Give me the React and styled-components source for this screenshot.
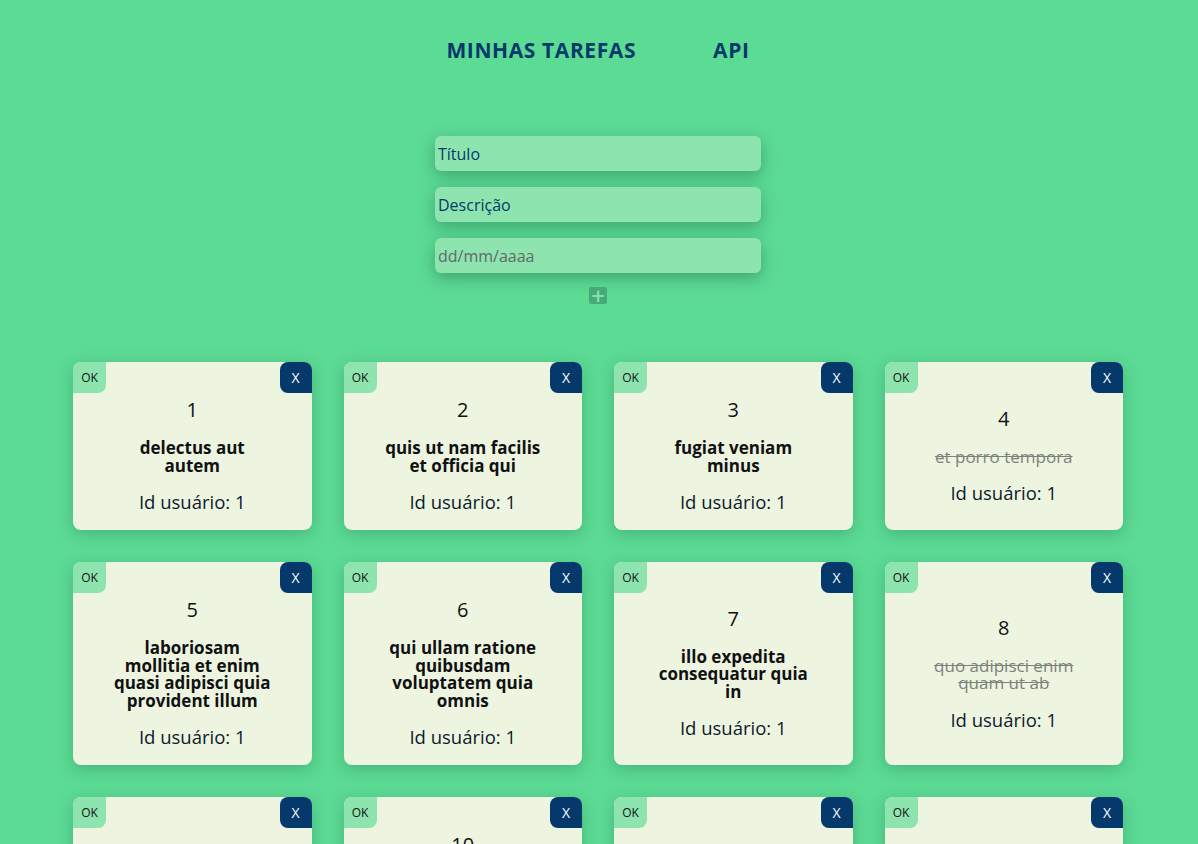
import React from 'react';
import styled, { createGlobalStyle } from 'styled-components';

const GlobalStyle = createGlobalStyle`
  * { box-sizing: border-box; }
  body {
    margin: 0;
    background: #5cdb95;
    font-family: "Open Sans", "Noto Sans", sans-serif;
  }
`;

const todos = [
  { id: 1, title: 'delectus aut autem', done: false },
  { id: 2, title: 'quis ut nam facilis et officia qui', done: false },
  { id: 3, title: 'fugiat veniam minus', done: false },
  { id: 4, title: 'et porro tempora', done: true },
  { id: 5, title: 'laboriosam mollitia et enim quasi adipisci quia provident illum', done: false },
  { id: 6, title: 'qui ullam ratione quibusdam voluptatem quia omnis', done: false },
  { id: 7, title: 'illo expedita consequatur quia in', done: false },
  { id: 8, title: 'quo adipisci enim quam ut ab', done: true },
  { id: 9, title: 'molestiae perspiciatis ipsa', done: false },
  { id: 10, title: 'illo est ratione doloremque quia maiores aut', done: true },
  { id: 11, title: 'vero rerum temporibus dolor', done: true },
  { id: 12, title: 'ipsa repellendus fugit nisi', done: true },
];

const Page = styled.main`
  padding-right: 2px;
`;

const Nav = styled.nav`
  display: flex;
  justify-content: center;
  gap: 77px;
  padding-top: 38px;
`;

const NavLink = styled.a`
  color: #05386b;
  font-size: 21px;
  line-height: 24px;
  font-weight: 700;
  letter-spacing: 0.6px;
  text-decoration: none;
  cursor: pointer;
`;

const Form = styled.form`
  display: flex;
  flex-direction: column;
  align-items: center;
  gap: 16px;
  margin-top: 74px;
`;

const Input = styled.input`
  width: 326px;
  height: 35px;
  border: none;
  border-radius: 6px;
  padding: 0 3px;
  background: #8ee4af;
  color: #05386b;
  font-family: inherit;
  font-size: 16px;
  box-shadow: 0 5px 16px rgba(20, 90, 60, 0.42);
  outline: none;
  &::placeholder {
    color: ${p => (p.$muted ? '#5f6b66' : '#05386b')};
    opacity: 1;
  }
`;

const AddButton = styled.button`
  width: 18px;
  height: 17px;
  margin-top: -2px;
  padding: 0;
  border: none;
  border-radius: 2px;
  background: #46ab79;
  color: #86e2ad;
  font-size: 18px;
  font-weight: 700;
  line-height: 17px;
  font-family: "DejaVu Sans", sans-serif;
  cursor: pointer;
`;

const Grid = styled.section`
  display: grid;
  grid-template-columns: repeat(4, 238.5px);
  justify-content: center;
  gap: 32px;
  margin-top: 58px;
  padding-bottom: 40px;
`;

const Card = styled.article`
  display: flex;
  flex-direction: column;
  background: #edf5e1;
  border-radius: 8px;
  overflow: hidden;
  box-shadow: 0 4px 16px rgba(20, 90, 60, 0.3);
`;

const CardBar = styled.div`
  display: flex;
  justify-content: space-between;
`;

const OkButton = styled.button`
  width: 33px;
  height: 31px;
  border: none;
  padding: 0;
  border-radius: 0 0 8px 0;
  background: #8ee4af;
  color: #111;
  font-family: inherit;
  font-size: 12px;
  cursor: pointer;
`;

const CloseButton = styled.button`
  width: 32px;
  height: 31px;
  border: none;
  padding: 0;
  border-radius: 8px 0 0 8px;
  background: #05386b;
  color: #fff;
  font-family: inherit;
  font-size: 14px;
  cursor: pointer;
`;

const CardBody = styled.div`
  flex: 1;
  display: flex;
  flex-direction: column;
  align-items: center;
  justify-content: center;
  padding: 5px 14px 17px;
  text-align: center;
`;

const Number = styled.h2`
  margin: 0 0 17px;
  font-size: 20px;
  line-height: 24px;
  font-weight: 400;
  color: #111;
`;

const Title = styled.h3`
  margin: 0 0 17px;
  max-width: 161px;
  font-size: 17px;
  line-height: 17.5px;
  font-weight: ${p => (p.$done ? 400 : 700)};
  color: ${p => (p.$done ? '#7c827a' : '#111')};
  text-decoration: ${p => (p.$done ? 'line-through' : 'none')};
`;

const UserId = styled.p`
  margin: 0;
  font-size: 18.5px;
  line-height: 22px;
  color: #0d1a2b;
`;

const TodoCard = ({ todo }) => (
  <Card>
    <CardBar>
      <OkButton type="button">OK</OkButton>
      <CloseButton type="button">X</CloseButton>
    </CardBar>
    <CardBody>
      <Number>{todo.id}</Number>
      <Title $done={todo.done}>{todo.title}</Title>
      <UserId>Id usuário: 1</UserId>
    </CardBody>
  </Card>
);

export default function App() {
  return (
    <Page>
      <GlobalStyle />
      <Nav>
        <NavLink>MINHAS TAREFAS</NavLink>
        <NavLink>API</NavLink>
      </Nav>
      <Form onSubmit={e => e.preventDefault()}>
        <Input placeholder="Título" />
        <Input placeholder="Descrição" />
        <Input placeholder="dd/mm/aaaa" $muted />
        <AddButton type="submit">+</AddButton>
      </Form>
      <Grid>
        {todos.map(todo => (
          <TodoCard key={todo.id} todo={todo} />
        ))}
      </Grid>
    </Page>
  );
}
